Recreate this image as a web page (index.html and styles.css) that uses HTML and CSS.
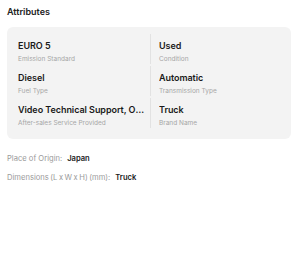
FILE: index.html
```html
<!DOCTYPE html>
<html>
<head>
<meta charset="utf-8">
<link rel="stylesheet" href="styles.css">
</head>
<body>
<div class="page">
  <h2 class="title">Attributes</h2>
  <div class="card">
    <div class="row">
      <div class="cell"><div class="val">EURO 5</div><div class="lbl">Emission Standard</div></div>
      <div class="cell right"><div class="val">Used</div><div class="lbl">Condition</div></div>
    </div>
    <div class="row">
      <div class="cell"><div class="val">Diesel</div><div class="lbl">Fuel Type</div></div>
      <div class="cell right"><div class="val">Automatic</div><div class="lbl">Transmission Type</div></div>
    </div>
    <div class="row">
      <div class="cell"><div class="val">Video Technical Support, Online Support</div><div class="lbl">After-sales Service Provided</div></div>
      <div class="cell right"><div class="val">Truck</div><div class="lbl">Brand Name</div></div>
    </div>
  </div>
  <div class="extra">
    <div class="line"><span class="k">Place of Origin:</span><span class="v">Japan</span></div>
    <div class="line"><span class="k dims">Dimensions (L x W x H) (mm):</span><span class="v">Truck</span></div>
  </div>
</div>
</body>
</html>
```
FILE: styles.css
```css
* { box-sizing: border-box; }
body {
  margin: 0;
  background: #fff;
  font-family: Inter, "Noto Sans", sans-serif;
  color: #222;
}
.page { padding: 6px 9px 0 7px; }
.title {
  margin: 0;
  font-size: 9px;
  font-weight: 600;
  line-height: 12px;
  color: #222;
}
.card {
  margin-top: 9px;
  background: #f3f3f3;
  border-radius: 6px;
  padding: 7px 0 11px 0;
  display: flex;
  flex-direction: column;
  gap: 2px;
}
.row { display: flex; }
.cell {
  flex: 1 1 0;
  min-width: 0;
  padding: 6px 5px 0 11px;
}
.cell.right {
  border-left: 1px solid #e2e2e2;
  padding-left: 8px;
}
.val {
  font-size: 9px;
  font-weight: 600;
  line-height: 12px;
  letter-spacing: -0.05px;
  color: #1a1a1a;
  white-space: nowrap;
  overflow: hidden;
  text-overflow: ellipsis;
}
.lbl {
  margin-top: 3px;
  font-size: 6.5px;
  line-height: 9px;
  color: #a6a6a6;
}
.extra { margin-top: 14px; display: flex; flex-direction: column; gap: 8px; }
.line { font-size: 7.6px; line-height: 11px; }
.k { color: #9a9a9a; }
.dims { word-spacing: -0.6px; }
.v { color: #1a1a1a; font-weight: 600; margin-left: 5px; }
```
